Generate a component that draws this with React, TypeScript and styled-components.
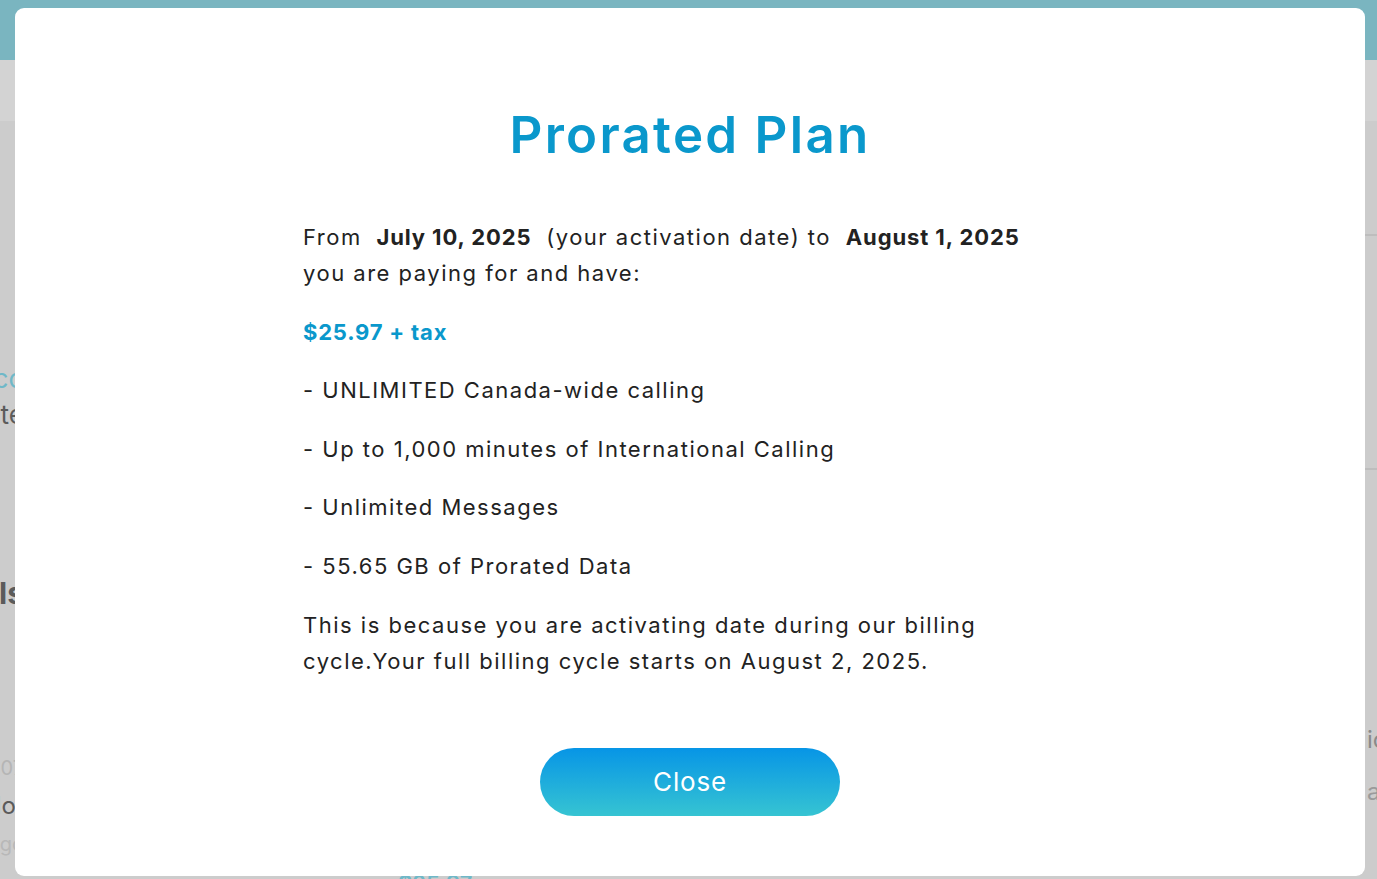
import styled, { createGlobalStyle } from 'styled-components';

const GlobalStyle = createGlobalStyle`
  html, body {
    margin: 0;
    padding: 0;
    height: 100%;
    overflow: hidden;
  }
  body {
    font-family: Inter, "Noto Sans", sans-serif;
    background: #cccccc;
  }
`;

const Page = styled.div`
  position: relative;
  width: 100vw;
  height: 100vh;
  display: flex;
  flex-direction: column;
  background: #cccccc;
  overflow: hidden;
`;

const TopBar = styled.div`
  height: 60px;
  background: #7ab5c0;
  flex-shrink: 0;
`;

const SubBar = styled.div`
  height: 61px;
  background: #d3d3d3;
  flex-shrink: 0;
`;

const PageBody = styled.div`
  flex: 1;
  display: flex;
  justify-content: space-between;
`;

const LeftCol = styled.div`
  width: 200px;
  margin-left: -176px;
  display: flex;
  flex-direction: column;
  align-items: flex-end;
  padding-top: 245px;
`;

const RightCol = styled.div`
  width: 50%;
  display: flex;
  flex-direction: column;
`;

const Divider = styled.div<{ $top: number }>`
  margin-top: ${(p) => p.$top}px;
  width: 100%;
  height: 2px;
  background: #bdbdbd;
`;

const BgText = styled.div<{ $color: string; $size: number; $weight?: number; $mt: number }>`
  margin-top: ${(p) => p.$mt}px;
  color: ${(p) => p.$color};
  font-size: ${(p) => p.$size}px;
  font-weight: ${(p) => p.$weight ?? 400};
  line-height: 1;
  white-space: nowrap;
`;

const Accent = styled.span`
  color: #d9a25a;
`;

const RightText = styled(BgText)`
  align-self: flex-end;
  width: 10px;
`;

const BottomPrice = styled.div`
  position: absolute;
  left: 398px;
  top: 870px;
  color: #6fb8c8;
  font-size: 22px;
  font-weight: 600;
`;

const Modal = styled.div`
  position: fixed;
  left: 15px;
  top: 8px;
  width: 1350px;
  height: 868px;
  background: #ffffff;
  border-radius: 9px;
  display: flex;
  flex-direction: column;
  align-items: center;
  font-family: Inter, "Noto Sans", sans-serif;
`;

const Title = styled.h2`
  margin: 96px 0 0;
  font-size: 51px;
  line-height: 62px;
  font-weight: 600;
  color: #0a98cc;
  letter-spacing: 2.3px;
`;

const Content = styled.div`
  box-sizing: border-box;
  width: 774px;
  padding-right: 30px;
  margin-top: 53px;
  display: flex;
  flex-direction: column;
  gap: 22.6px;
  color: #222222;
  font-size: 22px;
  line-height: 36px;
  letter-spacing: 1.5px;
`;

const Para = styled.p`
  margin: 0;
`;

const Strong = styled.b`
  font-weight: 700;
  letter-spacing: 0.9px;
  margin: 0 7px;
`;

const Price = styled.p`
  margin: 0;
  font-weight: 700;
  letter-spacing: 0.8px;
  color: #0a98cc;
`;

const CloseButton = styled.button`
  margin-top: 69px;
  width: 300px;
  height: 68px;
  border: none;
  border-radius: 34px;
  background: linear-gradient(180deg, #0795e6 0%, #36c4d2 100%);
  color: #ffffff;
  font-family: Inter, "Noto Sans", sans-serif;
  font-size: 26px;
  letter-spacing: 0.8px;
  cursor: pointer;
`;

const features = [
  '- UNLIMITED Canada-wide calling',
  '- Up to 1,000 minutes of International Calling',
  '- Unlimited Messages',
  '- 55.65 GB of Prorated Data',
];

export default function App() {
  return (
    <>
      <GlobalStyle />
      <Page>
        <TopBar />
        <SubBar />
        <PageBody>
          <LeftCol>
            <BgText $color="#6fb8c8" $size={26} $mt={0}>Disco</BgText>
            <BgText $color="#5b5b5b" $size={26} $mt={10}>Update</BgText>
            <BgText $color="#5b5b5b" $size={30} $weight={700} $mt={150}>Details</BgText>
            <BgText $color="#b5b5b5" $size={20} $mt={150}>2025-07</BgText>
            <BgText $color="#5b5b5b" $size={24} $mt={16}>Mo<Accent>|</Accent></BgText>
            <BgText $color="#b8b8b8" $size={20} $mt={16}>Logo</BgText>
          </LeftCol>
          <RightCol>
            <Divider $top={113} />
            <Divider $top={232} />
            <RightText $color="#8a8a8a" $size={24} $mt={258}>icon</RightText>
            <RightText $color="#9a9a9a" $size={24} $mt={28}>area</RightText>
          </RightCol>
        </PageBody>
        <BottomPrice>$25.97</BottomPrice>
        <Modal>
          <Title>Prorated Plan</Title>
          <Content>
            <Para>
              From <Strong>July 10, 2025</Strong> (your activation date) to{' '}
              <Strong>August 1, 2025</Strong> you are paying for and have:
            </Para>
            <Price>$25.97 + tax</Price>
            {features.map((f) => (
              <Para key={f}>{f}</Para>
            ))}
            <Para>
              This is because you are activating date during our billing cycle.Your full billing cycle
              starts on August 2, 2025.
            </Para>
          </Content>
          <CloseButton>Close</CloseButton>
        </Modal>
      </Page>
    </>
  );
}
